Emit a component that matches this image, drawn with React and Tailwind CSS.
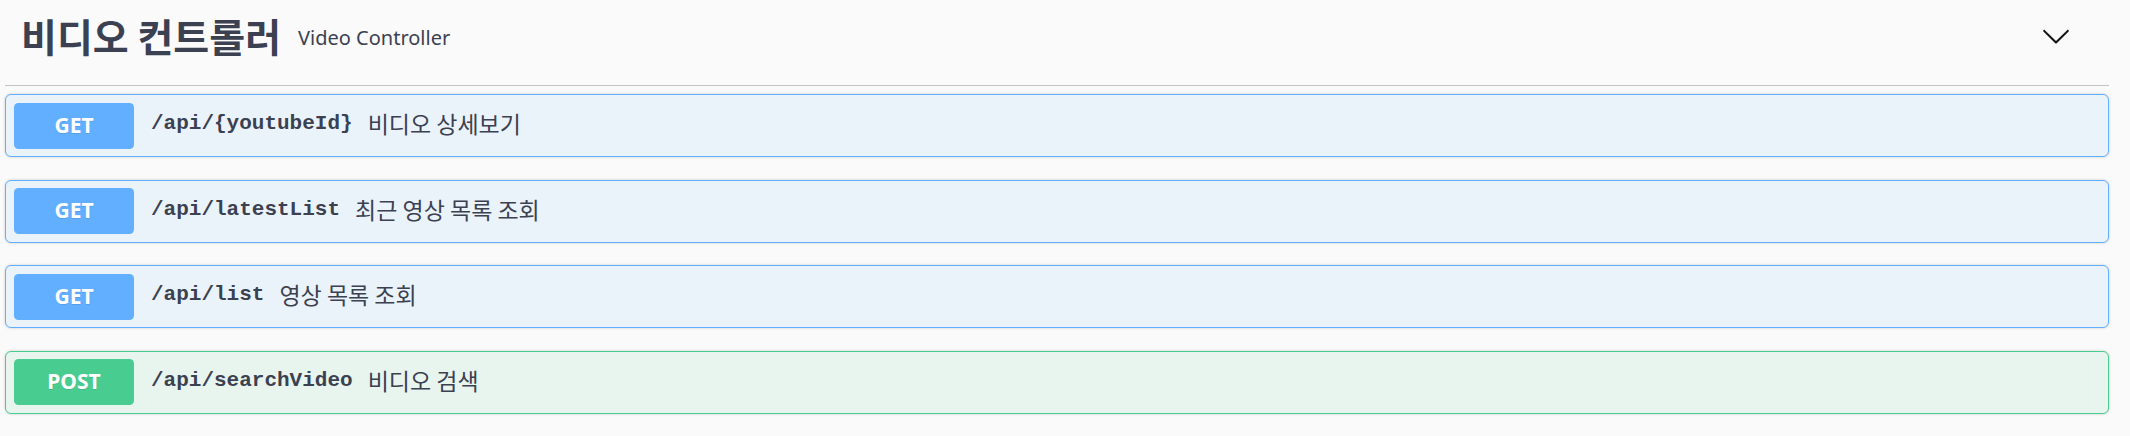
const endpoints = [
  { method: "GET", path: "/api/{youtubeId}", summary: "비디오 상세보기" },
  { method: "GET", path: "/api/latestList", summary: "최근 영상 목록 조회" },
  { method: "GET", path: "/api/list", summary: "영상 목록 조회" },
  { method: "POST", path: "/api/searchVideo", summary: "비디오 검색" },
];

const methodStyles = {
  GET: {
    box: "bg-[#ebf3fa] border-[#61affe]",
    badge: "bg-[#61affe]",
  },
  POST: {
    box: "bg-[#e8f5ef] border-[#49cc90]",
    badge: "bg-[#49cc90]",
  },
};

const Chevron = () => (
  <svg width="30" height="30" viewBox="0 0 20 20" className="text-[#111]">
    <path
      fill="currentColor"
      d="M17.418 6.109c.272-.268.709-.268.979 0s.271.701 0 .969l-7.908 7.83c-.27.268-.707.268-.979 0l-7.908-7.83c-.27-.268-.27-.701 0-.969.271-.268.709-.268.979 0L10 13.25l7.418-7.141z"
    />
  </svg>
);

const Operation = ({ method, path, summary }) => {
  const style = methodStyles[method];
  return (
    <div
      className={`flex items-center h-[63px] px-[8px] border rounded-[6px] shadow-[0_0_3px_rgba(0,0,0,0.19)] ${style.box}`}
    >
      <span
        className={`flex items-center justify-center w-[120px] h-[46px] rounded-[4.5px] text-white text-[21px] font-bold font-['Noto_Sans',sans-serif] [text-shadow:0_1px_0_rgba(0,0,0,0.1)] ${style.badge}`}
      >
        {method}
      </span>
      <span className="ml-[17px] -mt-[3px] text-[21px] font-bold text-[#3b4151] font-['Liberation_Mono',monospace]">
        {path}
      </span>
      <span className="ml-[15px] -mt-[4px] text-[23px] text-[#3b4151] font-['Noto_Sans_CJK_KR',sans-serif]">
        {summary}
      </span>
    </div>
  );
};

const App = () => {
  return (
    <div className="h-[436px] bg-[#fafafa] pl-[5px] pr-[21px] overflow-hidden">
      <div className="flex items-center h-[86px] pb-[14px] pl-[16px] pr-[38px] border-b border-[#c1c3c7]">
        <h3 className="text-[39px] font-bold text-[#3b4151] font-['Noto_Sans_CJK_KR',sans-serif] leading-none">
          비디오 컨트롤러
        </h3>
        <small className="ml-[17px] mt-[4px] text-[20px] text-[#3b4151] font-['Noto_Sans',sans-serif]">
          Video Controller
        </small>
        <button type="button" className="ml-auto flex items-center">
          <Chevron />
        </button>
      </div>
      <div className="flex flex-col gap-[22.5px] pt-[8px]">
        {endpoints.map((op) => (
          <Operation key={op.path} {...op} />
        ))}
      </div>
    </div>
  );
};

export default App;
